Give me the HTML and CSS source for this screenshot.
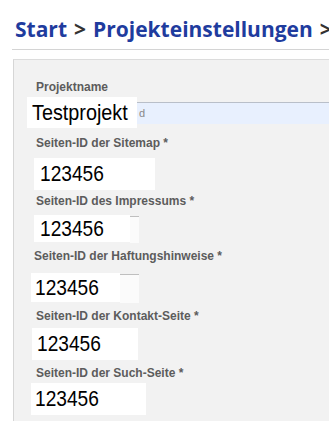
FILE: index.html
```html
<!DOCTYPE html>
<html lang="de">
<head>
    <meta charset="UTF-8">
    <meta name="viewport" content="width=device-width, initial-scale=1.0">
    <title>Projekteinstellungen</title>
    <link rel="stylesheet" href="styles.css">
</head>
<body>

<div id="crumb">
    <a href="#" class="crumb_link">Start</a><span class="crumb_sep">&gt;</span><a href="#" class="crumb_link">Projekteinstellungen</a><span class="crumb_sep">&gt;</span>
</div>
<div id="rule"></div>

<div id="panel">
    <div class="field f1">
        <div class="field_label">Projektname</div>
        <div class="field_row">
            <div class="field_input"><span class="ghost">d</span></div>
            <div class="patch"><span class="patch_text">Testprojekt</span></div>
        </div>
    </div>
    <div class="field f2">
        <div class="field_label">Seiten-ID der Sitemap *</div>
        <div class="field_row">
            <div class="patch"><span class="patch_text">123456</span></div>
        </div>
    </div>
    <div class="field f3">
        <div class="field_label">Seiten-ID des Impressums *</div>
        <div class="field_row">
            <div class="patch"><span class="patch_text">123456</span></div>
        </div>
    </div>
    <div class="field f4">
        <div class="field_label">Seiten-ID der Haftungshinweise *</div>
        <div class="field_row">
            <div class="patch"><span class="patch_text">123456</span></div>
        </div>
    </div>
    <div class="field f5">
        <div class="field_label">Seiten-ID der Kontakt-Seite *</div>
        <div class="field_row">
            <div class="patch"><span class="patch_text">123456</span></div>
        </div>
    </div>
    <div class="field f6">
        <div class="field_label">Seiten-ID der Such-Seite *</div>
        <div class="field_row">
            <div class="patch"><span class="patch_text">123456</span></div>
        </div>
    </div>
</div>

</body>
</html>
```

FILE: styles.css
```css
body{
    margin: 0;
    background-color: white;
    font-family: "Liberation Sans", Arial, sans-serif;
    overflow: hidden;
    height: 421px;
}
#crumb{
    padding: 14px 0 0 15px;
    font-family: "Open Sans", sans-serif;
    font-weight: bold;
    font-size: 21px;
    line-height: 30px;
    white-space: nowrap;
}
.crumb_link{
    color: #1f3c9e;
    text-decoration: none;
}
.crumb_sep{
    color: #333333;
    margin: 0 7px;
}
#rule{
    margin: 5px 0 0 12px;
    border-top: 1px solid #d4d4d4;
}
#panel{
    margin: 9px 0 0 13px;
    height: 370px;
    padding-top: 21px;
    box-sizing: border-box;
    background-color: #f2f2f2;
    border-top: 1px solid #dcdcdc;
    border-left: 1px solid #d6d6d6;
}
.field_label{
    margin-left: 22px;
    font-size: 12px;
    line-height: 13px;
    font-weight: bold;
    color: #5c5c5c;
}
.field_row{
    position: relative;
}
.field_input{
    margin-left: 21px;
    height: 22px;
    background-color: #e8f0fe;
    border-top: 1px solid #b9bfc9;
    box-sizing: border-box;
    padding-left: 104px;
    font-size: 11px;
    line-height: 20px;
    color: #888888;
}
.patch{
    position: absolute;
    top: 0;
    background-color: white;
    color: black;
    font-size: 22px;
    padding-left: 6px;
    box-sizing: border-box;
    white-space: nowrap;
}
.patch_text{
    display: inline-block;
    transform: scaleX(0.87);
    transform-origin: left center;
}

/* field 1 */
.f1 .field_row{
    margin-top: 3px;
    height: 31px;
    padding-top: 5px;
    box-sizing: border-box;
}
.f1 .patch{
    left: 13px;
    width: 110px;
    height: 31px;
    line-height: 31px;
    padding-left: 5px;
}
.f1 .patch_text{
    transform: scaleX(0.9);
}

/* field 2 */
.f2{
    margin-top: 9px;
}
.f2 .field_row{
    margin-top: 8px;
    height: 32px;
}
.f2 .patch{
    left: 20px;
    width: 121px;
    height: 32px;
    line-height: 32px;
}

/* field 3 */
.f3{
    margin-top: 5px;
}
.f3 .field_row{
    margin-top: 7px;
    height: 27px;
}
.f3 .patch{
    left: 20px;
    width: 96px;
    height: 27px;
    line-height: 27px;
}
.f3 .field_row::after{
    content: "";
    position: absolute;
    left: 116px;
    top: 1px;
    width: 9px;
    height: 26px;
    border-top: 1px solid #bfbfbf;
    background-color: #fbfbfb;
}

/* field 4 */
.f4{
    margin-top: 8px;
}
.f4 .field_label{
    margin-left: 20px;
}
.f4 .field_row{
    margin-top: 10px;
    height: 29px;
}
.f4 .patch{
    left: 17px;
    width: 89px;
    height: 29px;
    line-height: 29px;
    padding-left: 4px;
}
.f4 .field_row::after{
    content: "";
    position: absolute;
    left: 106px;
    top: 1px;
    width: 19px;
    height: 28px;
    border-top: 1px solid #bfbfbf;
    background-color: #fbfbfb;
}

/* field 5 */
.f5{
    margin-top: 8px;
}
.f5 .field_row{
    margin-top: 5px;
    height: 32px;
}
.f5 .patch{
    left: 18px;
    width: 106px;
    height: 32px;
    line-height: 32px;
    padding-left: 5px;
}

/* field 6 */
.f6{
    margin-top: 7px;
}
.f6 .field_row{
    margin-top: 3px;
    height: 32px;
}
.f6 .patch{
    left: 17px;
    width: 115px;
    height: 32px;
    line-height: 32px;
    padding-left: 4px;
}
```
